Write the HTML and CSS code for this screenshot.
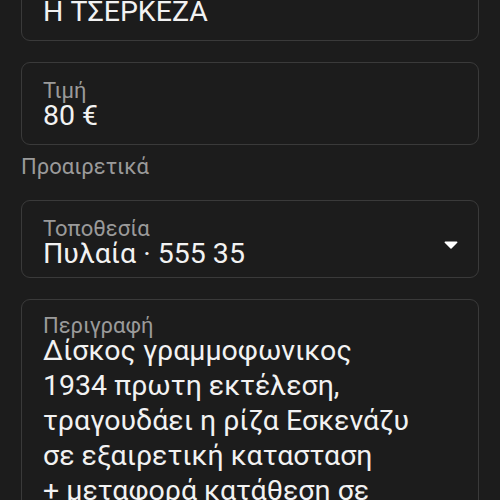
FILE: index.html
```html
<!DOCTYPE html>
<html lang="el">
<head>
    <meta charset="UTF-8">
    <meta name="viewport" content="width=device-width, initial-scale=1.0">
    <title>Αγγελία</title>
    <link rel="stylesheet" href="styles.css">
</head>
<body>
    <div class="form">
        <div class="field">
            <div class="field-label">Τίτλος</div>
            <div class="field-value">Η ΤΣΕΡΚΕΖΑ</div>
        </div>

        <div class="field">
            <div class="field-label">Τιμή</div>
            <div class="field-value">80 €</div>
        </div>

        <div class="section-title">Προαιρετικά</div>

        <div class="field field-select">
            <div class="field-text">
                <div class="field-label">Τοποθεσία</div>
                <div class="field-value">Πυλαία · 555 35</div>
            </div>
            <svg class="dropdown" viewBox="0 0 24 24" width="30" height="30">
                <path d="M7.4 10h9.2c.5 0 .8.6.4 1l-4.6 4.6c-.2.2-.6.2-.8 0L7 11c-.4-.4-.1-1 .4-1z" fill="#fff"/>
            </svg>
        </div>

        <div class="field field-area">
            <div class="field-label">Περιγραφή</div>
            <div class="field-value multiline">Δίσκος γραμμοφωνικος<br>1934 πρωτη εκτέλεση,<br>τραγουδάει η ρίζα Εσκενάζυ<br>σε εξαιρετική κατασταση<br>+ μεταφορά κατάθεση σε<br>λογαριασμό</div>
        </div>
    </div>
</body>
</html>
```

FILE: styles.css
```css
html, body {
    margin: 0;
    padding: 0;
    background-color: #1c1c1c;
    height: 500px;
    overflow: hidden;
}
body {
    font-family: Roboto, "Noto Sans", sans-serif;
    color: #f2f2f2;
}
.form {
    margin-top: -42px;
    padding: 0 21px;
    display: flex;
    flex-direction: column;
}
.field {
    border: 1.5px solid #3a3a3a;
    border-radius: 9px;
    padding: 18px 21px 13px;
    margin-bottom: 21px;
}
.field-label {
    font-size: 22px;
    line-height: 20px;
    color: #9a9a9a;
}
.field-value {
    font-size: 28.5px;
    line-height: 30px;
    color: #f2f2f2;
}
.multiline {
    line-height: 35px;
    margin-top: -3px;
}
.section-title {
    font-size: 22px;
    line-height: 24px;
    color: #9a9a9a;
    margin: -11px 0 21px;
}
.field-select {
    display: flex;
    align-items: center;
    justify-content: space-between;
    padding-top: 18px;
    padding-bottom: 8px;
    padding-right: 12px;
}
.dropdown {
    display: block;
}
.field-area {
    padding-top: 16px;
}
```
